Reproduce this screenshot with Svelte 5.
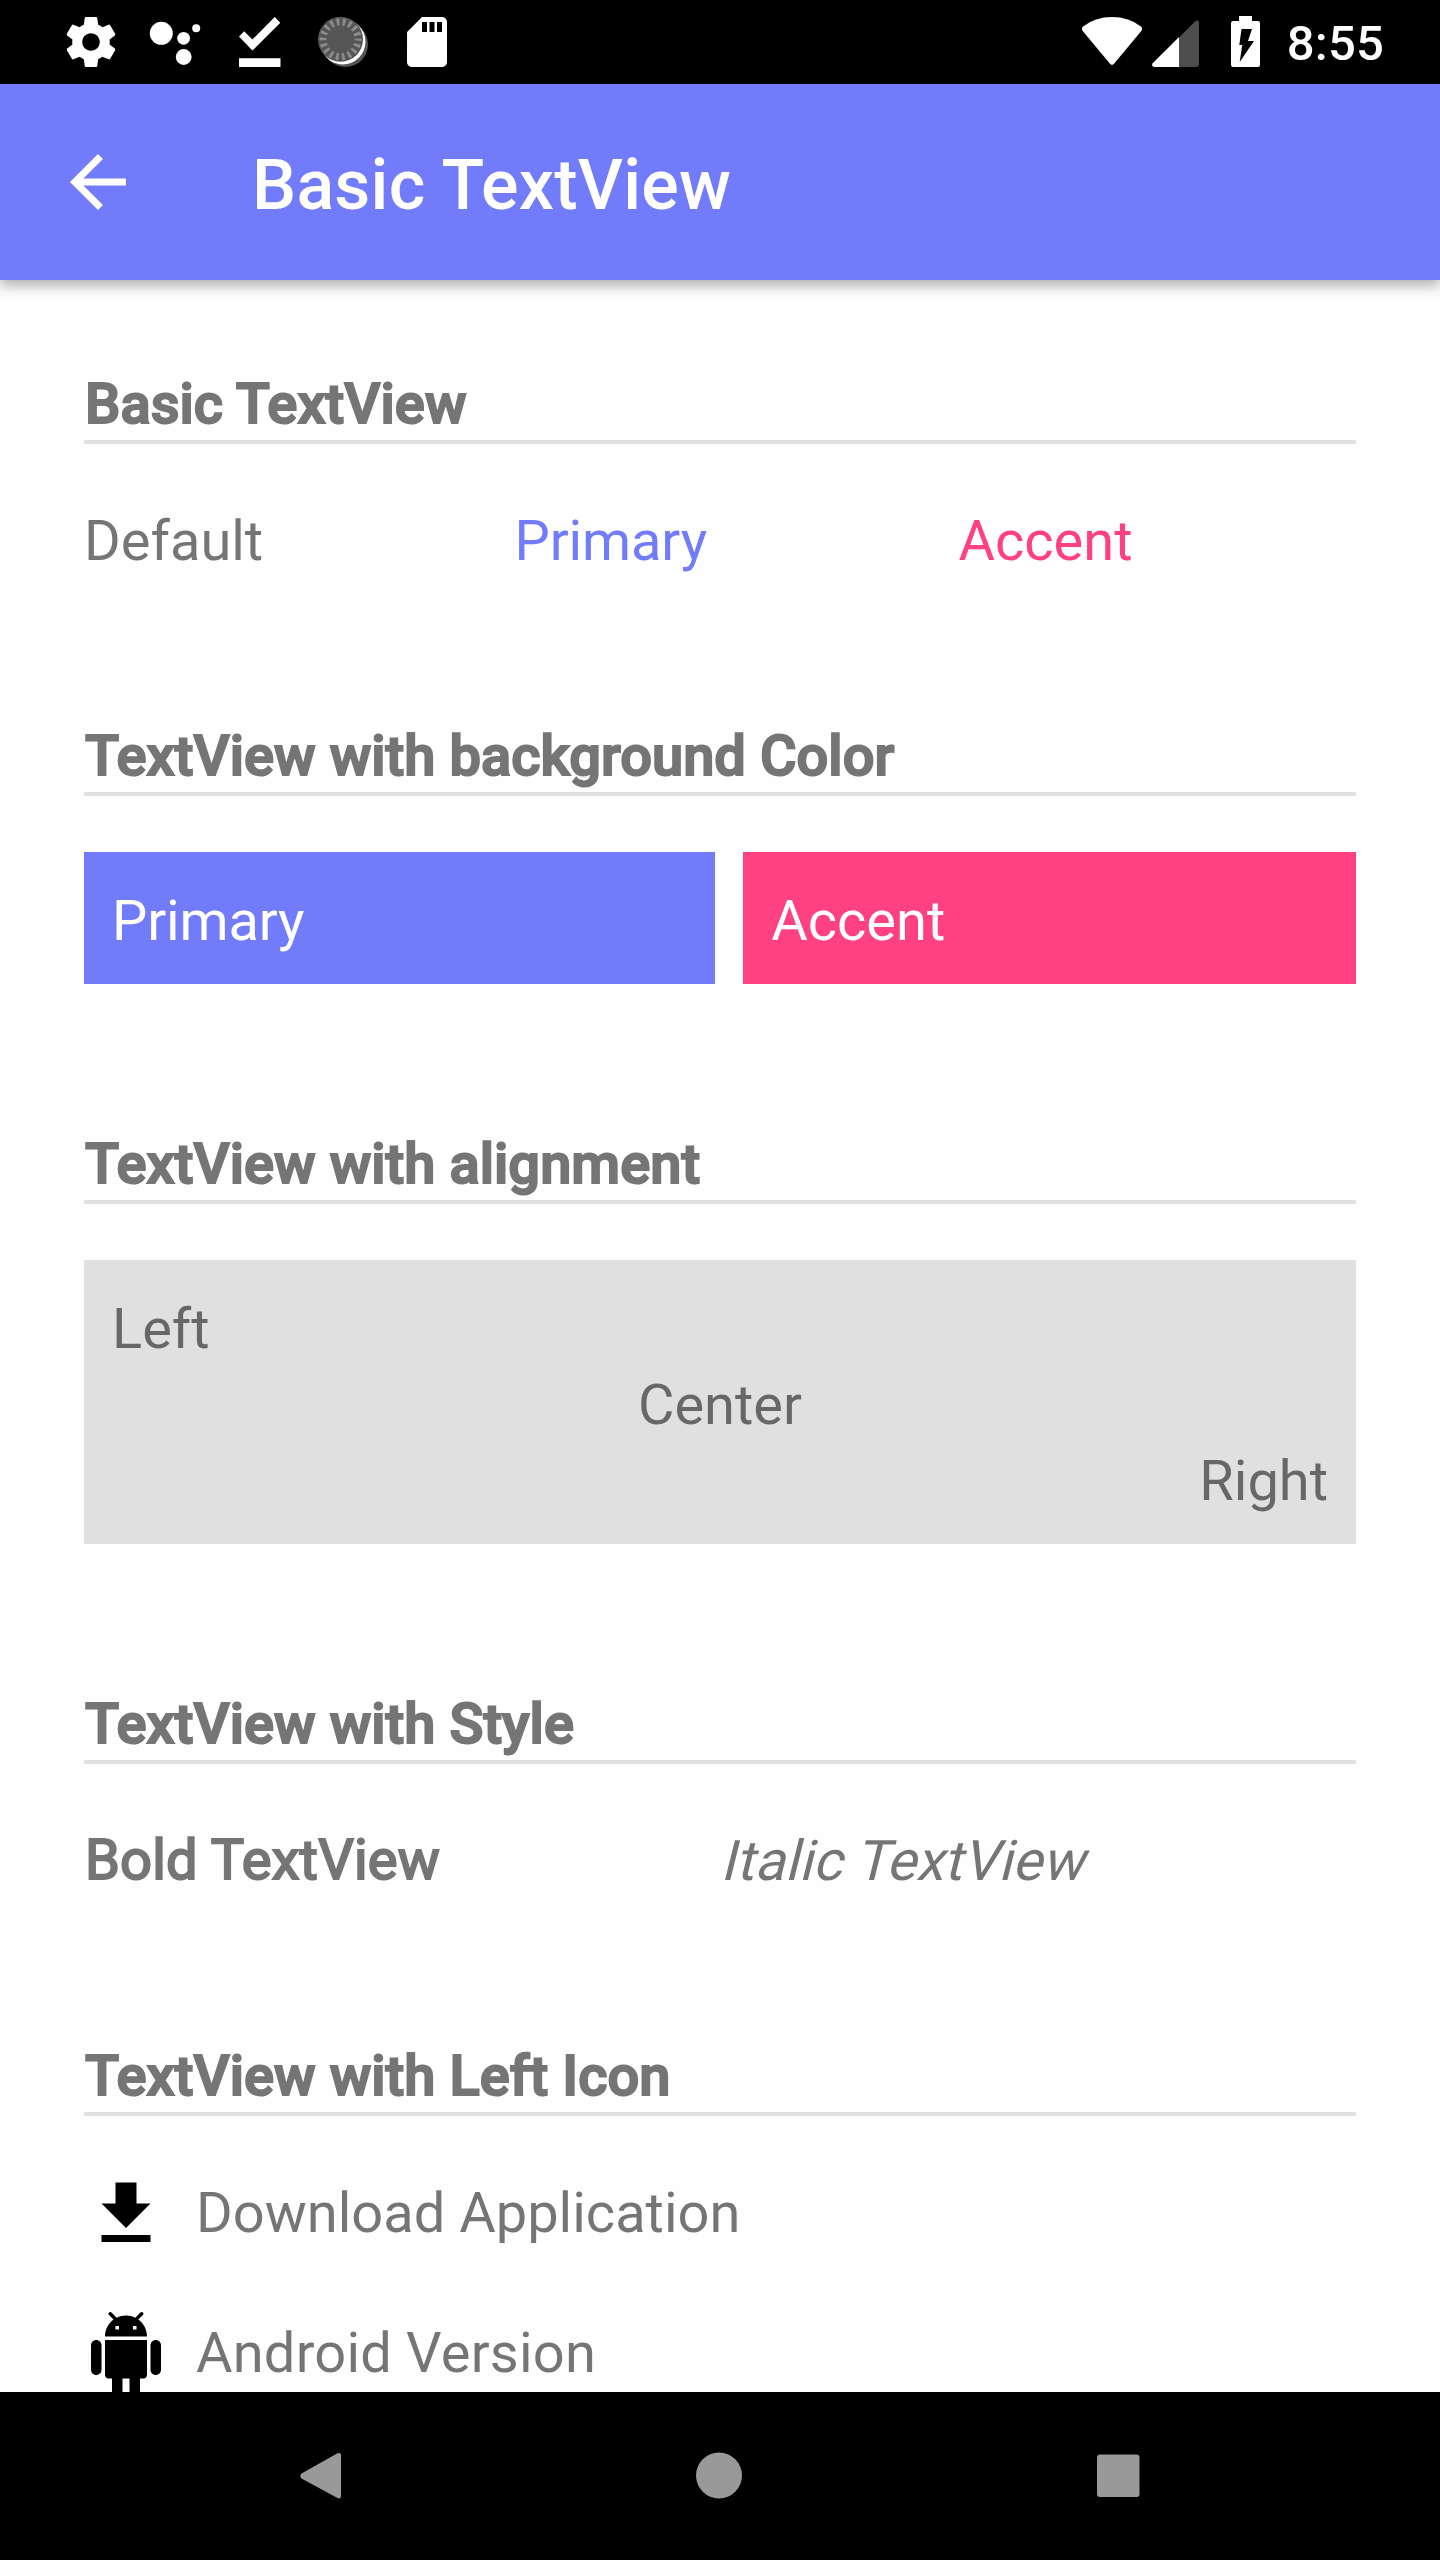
<script>
  const swatches = ['Primary', 'Accent'];
</script>

<div class="screen">
  <div class="status">
    <div class="notifications">
      <svg viewBox="0 0 24 24" fill="#fff"><path d="M19.43 12.98c.04-.32.07-.64.07-.98s-.03-.66-.07-.98l2.11-1.65c.19-.15.24-.42.12-.64l-2-3.46c-.12-.22-.39-.3-.61-.22l-2.49 1c-.52-.4-1.08-.73-1.69-.98l-.38-2.65C14.46 2.18 14.25 2 14 2h-4c-.25 0-.46.18-.49.42l-.38 2.65c-.61.25-1.17.59-1.69.98l-2.49-1c-.23-.09-.49 0-.61.22l-2 3.46c-.13.22-.07.49.12.64l2.11 1.65c-.04.32-.07.65-.07.98s.03.66.07.98l-2.11 1.65c-.19.15-.24.42-.12.64l2 3.46c.12.22.39.3.61.22l2.49-1c.52.4 1.08.73 1.69.98l.38 2.65c.03.24.24.42.49.42h4c.25 0 .46-.18.49-.42l.38-2.65c.61-.25 1.17-.59 1.69-.98l2.49 1c.23.09.49 0 .61-.22l2-3.46c.12-.22.07-.49-.12-.64l-2.11-1.65zM12 15.500c-1.930 0-3.500-1.570-3.500-3.500s1.570-3.500 3.500-3.500 3.500 1.570 3.500 3.500-1.570 3.500-3.500 3.500z"/></svg>
      <svg viewBox="0 0 60 60" fill="#fff"><circle cx="16.300" cy="21.300" r="11.500"/><circle cx="38.600" cy="26.300" r="6.400"/><circle cx="51.200" cy="16.200" r="4"/><circle cx="38.700" cy="45" r="7.900"/></svg>
      <svg viewBox="0 0 60 60" fill="#fff"><path d="M10 24.500l5.200-5.200 8.200 8.200L45.700 5l5.600 5.700L23.400 38.500zM10 46.300h41.500V55H10z"/></svg>
      <svg viewBox="0 0 60 60"><circle cx="32.300" cy="32.400" r="22.700" fill="#555"/><circle cx="29.800" cy="29.800" r="22.700" fill="#fff"/><circle cx="27.500" cy="27.300" r="22.500" fill="#555"/><circle cx="27.500" cy="27.300" r="17.500" fill="none" stroke="#8c8c8c" stroke-width="7" stroke-dasharray="2.800 3.309" stroke-dashoffset="1.400"/></svg>
      <svg viewBox="0 0 24 24" fill="#fff"><path d="M18 2h-8L4.020 8 4 20c0 1.100.9 2 2 2h12c1.100 0 2-.9 2-2V4c0-1.100-.9-2-2-2zm-6 6h-2V4h2v4zm3 0h-2V4h2v4zm3 0h-2V4h2v4z"/></svg>
    </div>
    <div class="system">
      <svg class="wifi" viewBox="0 0 60 50" fill="#fff"><path d="M1 9.500Q13 0 30 0T59 9.500Q61 11.500 59.300 14L32 46.800Q30 49 28 46.800L.7 14Q-1 11.500 1 9.500z"/></svg>
      <svg class="cell" viewBox="0 0 47 47"><path d="M27 17.500L43.500 1Q47 -1 47 3V44Q47 47 44 47H27z" fill="#4d4d4d"/><path d="M27 17V47H2Q-1 46 .7 43.300z" fill="#fff"/></svg>
      <svg class="battery" viewBox="0 0 29 51"><path d="M8 0h13v5h6q2 0 2 2v42q0 2-2 2H2q-2 0-2-2V7q0-2 2-2h6z" fill="#fff"/><path d="M10.500 13H21l-4 12h6L8.700 46l2.500-17H8.300z"/></svg>
      <span class="clock">8:55</span>
    </div>
  </div>

  <header>
    <svg viewBox="0 0 24 24" fill="#fff"><path d="M20 11H7.830l5.590-5.590L12 4l-8 8 8 8 1.410-1.410L7.830 13H20v-2z"/></svg>
    <h1>Basic TextView</h1>
  </header>

  <main>
    <section>
      <h2>Basic TextView</h2>
      <div class="row">
        <span>Default</span><span class="primary">Primary</span><span class="accent">Accent</span>
      </div>
    </section>
    <section>
      <h2>TextView with background Color</h2>
      <div class="row">
        {#each swatches as name}
          <span class="swatch {name.toLowerCase()}-bg">{name}</span>
        {/each}
      </div>
    </section>
    <section>
      <h2>TextView with alignment</h2>
      <div class="align">
        <p>Left</p>
        <p class="center">Center</p>
        <p class="right">Right</p>
      </div>
    </section>
    <section>
      <h2>TextView with Style</h2>
      <div class="row styles"><span class="bold">Bold TextView</span><span class="italic">Italic TextView</span></div>
    </section>
    <section>
      <h2>TextView with Left Icon</h2>
      <div class="list">
        <div class="item">
          <svg viewBox="0 0 24 24"><path d="M19 9h-4V3H9v6H5l7 7 7-7zM5 18v2h14v-2H5z"/></svg>
          <span>Download Application</span>
        </div>
        <div class="item">
          <svg viewBox="0 0 24 24"><path d="M6 18c0 .55.45 1 1 1h1v3.500c0 .83.67 1.500 1.500 1.500s1.500-.67 1.500-1.500V19h2v3.500c0 .83.67 1.500 1.500 1.500s1.500-.67 1.500-1.500V19h1c.55 0 1-.45 1-1V8H6v10zM3.500 8C2.670 8 2 8.670 2 9.500v7c0 .83.67 1.500 1.500 1.500S5 17.330 5 16.500v-7C5 8.670 4.330 8 3.500 8zm17 0c-.83 0-1.500.67-1.500 1.500v7c0 .83.67 1.500 1.500 1.500s1.500-.67 1.500-1.500v-7c0-.83-.67-1.500-1.500-1.500zm-4.970-5.840l1.300-1.300c.2-.2.2-.51 0-.71-.2-.2-.51-.2-.71 0l-1.480 1.480C13.850 1.230 12.950 1 12 1c-.96 0-1.860.23-2.660.63L7.850.15c-.2-.2-.51-.2-.71 0-.2.2-.2.51 0 .71l1.310 1.310C6.970 3.260 6 5.010 6 7h12c0-1.990-.97-3.750-2.470-4.840zM10 5H9V4h1v1zm5 0h-1V4h1v1z"/></svg>
          <span class="loose">Android Version</span>
        </div>
      </div>
    </section>
  </main>

  <nav>
    <svg viewBox="-4 0 48 48" fill="#999"><path d="M1.500 21.500L37.500 1.300Q41 0 41 3V44Q41 47.500 37.500 46L1.500 26.500Q-1 24 1.500 21.500z"/></svg>
    <svg viewBox="0 0 48 48" fill="#999"><circle cx="24" cy="23.500" r="23"/></svg>
    <svg viewBox="0 0 48 48" fill="#999"><rect x="3" y="2.500" width="42.500" height="42.500" rx="3"/></svg>
  </nav>
</div>

<style>
  :global(body) { background: #fff; }
  .screen {
    width: 1440px;
    height: 2560px;
    display: flex;
    flex-direction: column;
    overflow: hidden;
    background: #fefefe;
    font-family: Roboto, sans-serif;
    font-size: 56px;
    line-height: 82px;
    color: rgba(0, 0, 0, 0.54);
  }
  svg { display: block; flex: none; }
  .status {
    flex: none;
    height: 84px;
    background: #000;
    display: flex;
    justify-content: space-between;
    padding: 0 56px 0 61px;
  }
  .notifications { display: flex; align-items: center; gap: 24px; }
  .notifications svg { width: 60px; height: 60px; }
  .system { display: flex; align-items: flex-start; }
  .wifi { width: 60px; height: 50px; margin: 17px 10px 0 0; }
  .cell { width: 47px; height: 47px; margin: 20px 32px 0 0; }
  .battery { width: 29px; height: 51px; margin: 16px 27px 0 0; }
  .clock { color: #fff; font-size: 49px; font-weight: 500; line-height: 88px; letter-spacing: 0.2px; }
  header {
    flex: none;
    height: 196px;
    background: #727cfb;
    display: flex;
    align-items: center;
    gap: 112px;
    padding-left: 56px;
    box-shadow: 0 6px 12px rgba(0, 0, 0, 0.3);
  }
  header svg { width: 84px; height: 84px; }
  h1 {
    margin: 0;
    padding-top: 6px;
    color: #fff;
    font-size: 70px;
    line-height: 84px;
    font-weight: 500;
    letter-spacing: 0.22px;
  }
  main {
    flex: 1;
    min-height: 0;
    overflow: hidden;
    padding: 84px 84px 0;
    display: flex;
    flex-direction: column;
    gap: 140px;
  }
  h2 {
    margin: 0 0 56px;
    height: 76px;
    border-bottom: 4px solid #e0e0e0;
    font-size: 56px;
    line-height: 80px;
    font-weight: 500;
    color: #757575;
    -webkit-text-stroke: 2px #757575;
    text-indent: 1px;
    letter-spacing: 0.05px;
    white-space: nowrap;
  }
  p { margin: 0; height: 76px; }
  .row { display: flex; gap: 28px; white-space: nowrap; }
  .row span { flex: 1 1 auto; height: 76px; }
  .primary, .primary-bg { letter-spacing: -0.15px; }
  .primary { color: #727cfb; }
  .accent { color: #ff4081; }
  .swatch { color: #fff; padding: 28px; }
  .primary-bg { background: #727cfb; }
  .accent-bg { background: #ff4081; }
  .align { background: #e0e0e0; padding: 28px; }
  .center { text-align: center; }
  .right { text-align: right; }
  .styles { gap: 8px; letter-spacing: 0.2px; }
  .bold {
    color: #757575;
    -webkit-text-stroke: 2px #757575;
    line-height: 80px;
    text-indent: 1px;
  }
  /* Slanted upright face, sheared around the text baseline */
  .italic { transform: skewX(-14deg); transform-origin: 0 60px; }
  .list { display: flex; flex-direction: column; gap: 56px; }
  .item { display: flex; gap: 28px; height: 84px; }
  .item svg { width: 84px; height: 84px; }
  .loose { letter-spacing: 0.2px; }
  nav {
    flex: none;
    height: 168px;
    background: #000;
    display: flex;
    justify-content: center;
    align-items: center;
    gap: 351px;
    padding-right: 2px;
  }
  nav svg { width: 48px; height: 48px; }
</style>
